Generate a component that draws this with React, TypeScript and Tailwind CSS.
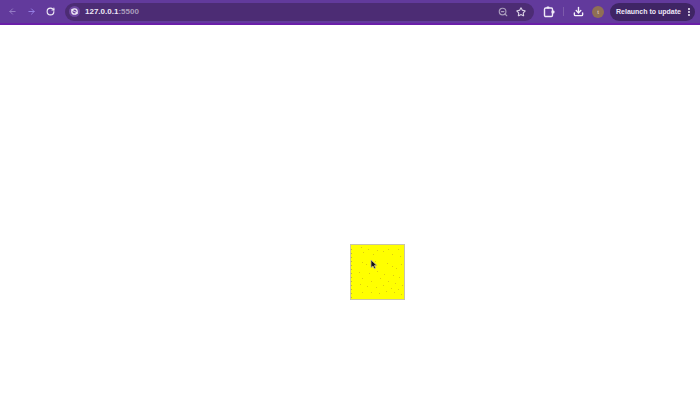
import { ArrowLeft, ArrowRight, RotateCw, ZoomOut, Star, Download, EllipsisVertical } from 'lucide-react';

// speckles on the yellow square, [x, y] inside a 55x55 box
const dots: [number, number][] = [
  [10, 2], [17, 4], [26, 5], [37, 4], [47, 4], [12, 7], [22, 9], [32, 6], [41, 9], [49, 11],
  [11, 17], [15, 19], [24, 16], [36, 18], [41, 21], [45, 23], [50, 19], [8, 27],
  [18, 28], [26, 26], [33, 29], [42, 30], [48, 32], [11, 33], [20, 36], [29, 33], [37, 36],
  [44, 38], [51, 40], [9, 39], [16, 41], [25, 42], [32, 40], [40, 43], [47, 44], [11, 47],
  [20, 47], [28, 48], [35, 46], [43, 47], [50, 49],
];
const edgeDots = [4, 8, 12, 16, 20, 24, 28, 32, 36, 40, 44, 48, 52];

function Speckles() {
  return (
    <svg width="54" height="54" viewBox="0 0 54 54" className="block">
      {dots.map(([x, y]) => (
        <rect key={`${x}-${y}`} x={x} y={y} width="1" height="1" fill="#dccb10" />
      ))}
      {edgeDots.map((y) => (
        <rect key={y} x="0" y={y} width="1" height="1" fill="#c4b430" />
      ))}
      <path d="M20 15 L20 22.5 L22 21 L23.2 23.6 L24.6 23 L23.4 20.4 L25.6 20.2 Z" fill="#111" stroke="#b9b3a0" strokeWidth="0.8" />
    </svg>
  );
}

function SiteIcon() {
  return (
    <svg width="11" height="11" viewBox="0 0 11 11" className="shrink-0">
      <circle cx="5.5" cy="5.5" r="5.5" fill="#6d46a0" />
      <circle cx="5.5" cy="5.5" r="2.7" fill="none" stroke="#efe9f7" strokeWidth="1.3" />
      <path d="M2 3.6 L5.5 5.5 M5.5 5.5 L9 7.4" stroke="#efe9f7" strokeWidth="1" />
    </svg>
  );
}

function ExtensionIcon() {
  return (
    <svg width="12" height="12" viewBox="0 0 12 12" fill="none" className="ml-[9px] shrink-0">
      <rect x="1.5" y="2" width="8" height="8.5" rx="1.2" stroke="#f0ebf7" strokeWidth="1.4" />
      <rect x="8.5" y="4.5" width="3" height="3" rx="1" fill="#f0ebf7" />
      <rect x="3.5" y="0.6" width="3" height="2" rx="0.8" fill="#f0ebf7" />
    </svg>
  );
}

export default function App() {
  return (
    <div className="w-[700px] h-[415px] bg-white overflow-hidden font-['Liberation_Sans',sans-serif]">
      <div className="h-[25px] flex items-center bg-[#623a9c] border-b-2 border-[#6a1fa8] pl-[8px] pr-[5px]">
        <ArrowLeft className="w-[9px] h-[9px] text-[#9a82c8]" strokeWidth={2.4} />
        <ArrowRight className="w-[9px] h-[9px] ml-[10px] text-[#9a86ea]" strokeWidth={2.4} />
        <RotateCw className="w-[9px] h-[9px] ml-[10px] text-[#f0ebf7]" strokeWidth={3} />
        <div className="ml-[10px] w-[469px] h-[18px] rounded-full bg-[#4c2c74] flex items-center pl-[4px] pr-[8px]">
          <SiteIcon />
          <span className="ml-[5px] text-[8px] leading-none font-bold text-[#ece6f5]">
            127.0.0.1<span className="text-[#a99cbc]">:5500</span>
          </span>
          <ZoomOut className="ml-auto w-[10px] h-[10px] text-[#a99cbc]" strokeWidth={2.8} />
          <Star className="ml-[8px] w-[10px] h-[10px] text-[#d8d0e4]" strokeWidth={2.6} />
        </div>
        <ExtensionIcon />
        <div className="ml-[8px] w-px h-[9px] bg-[#7d5bab]" />
        <Download className="ml-[9px] w-[11px] h-[11px] text-[#f4f0f9]" strokeWidth={3} />
        <div className="ml-[8px] w-[12px] h-[12px] rounded-full bg-[#8f6f55] flex items-center justify-center text-[6px] leading-none text-[#e8dccc]">
          t
        </div>
        <div className="ml-[6px] w-[85px] h-[18px] rounded-full bg-[#3f2565] flex items-center pl-[6px]">
          <span className="text-[7px] leading-none font-bold text-[#ece6f5] whitespace-nowrap">Relaunch to update</span>
          <EllipsisVertical className="ml-auto mr-[1px] w-[10px] h-[10px] text-[#f0ebf7]" strokeWidth={3} />
        </div>
      </div>
      <div className="pl-[350px] pt-[219px]">
        <div className="w-[55px] h-[56px] bg-[#ffff00] border border-[#c8c4a8]">
          <Speckles />
        </div>
      </div>
    </div>
  );
}
